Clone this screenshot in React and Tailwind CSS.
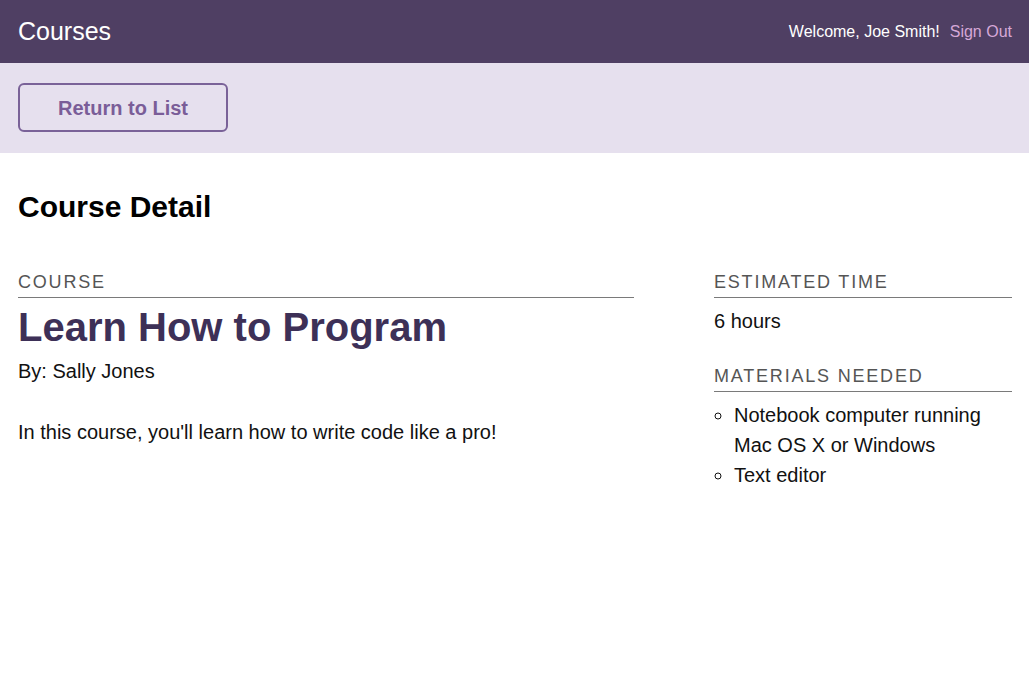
import React from "react";

const font = { fontFamily: '"Liberation Sans", Arial, sans-serif' };

const course = {
  title: "Learn How to Program",
  author: "Sally Jones",
  description: "In this course, you'll learn how to write code like a pro!",
  estimatedTime: "6 hours",
  materials: ["Notebook computer running Mac OS X or Windows", "Text editor"],
};

const SectionLabel = ({ children }) => (
  <h3 className="text-[18px] leading-[24px] font-normal uppercase tracking-[0.1em] text-[#555] pb-[3px] border-b border-[#7a7a7a]">
    {children}
  </h3>
);

const Header = () => (
  <header className="h-[63px] bg-[#4f3f63] flex items-center justify-between pl-[18px] pr-[17px]">
    <h1 className="text-[25px] leading-none text-white">Courses</h1>
    <nav className="flex items-center gap-[10px] text-[16px]">
      <span className="text-white font-medium">Welcome, Joe Smith!</span>
      <a href="#" className="text-[#d6a8d7]">
        Sign Out
      </a>
    </nav>
  </header>
);

export default function App() {
  return (
    <div className="min-h-screen bg-white text-[#111]" style={font}>
      <Header />

      {/* actions bar */}
      <div className="bg-[#e6e0ee] h-[90px] pl-[18px] pt-[20px]">
        <button className="w-[210px] h-[49px] rounded-[6px] border-2 border-[#7a6298] text-[#7a5d98] text-[20px] font-bold">
          Return to List
        </button>
      </div>

      <main className="pl-[18px] pr-[17px] pt-[36px]">
        <h2 className="text-[30px] leading-[36px] font-bold text-black">Course Detail</h2>

        <div className="flex gap-[80px] mt-[45px]">
          <div className="flex-1">
            <SectionLabel>Course</SectionLabel>
            <h4 className="mt-[5px] text-[40px] leading-[48px] font-bold text-[#3d3057]">
              {course.title}
            </h4>
            <p className="mt-[5px] text-[20px] leading-[30px]">By: {course.author}</p>
            <p className="mt-[31px] text-[20px] leading-[30px]">{course.description}</p>
          </div>

          <div className="w-[298px]">
            <SectionLabel>Estimated Time</SectionLabel>
            <p className="mt-[8px] text-[20px] leading-[30px]">{course.estimatedTime}</p>

            <div className="mt-[28px]">
              <SectionLabel>Materials Needed</SectionLabel>
            </div>
            <ul className="mt-[8px] list-[circle] pl-5 text-[20px] leading-[30px]">
              {course.materials.map((m) => (
                <li key={m}>{m}</li>
              ))}
            </ul>
          </div>
        </div>
      </main>
    </div>
  );
}
